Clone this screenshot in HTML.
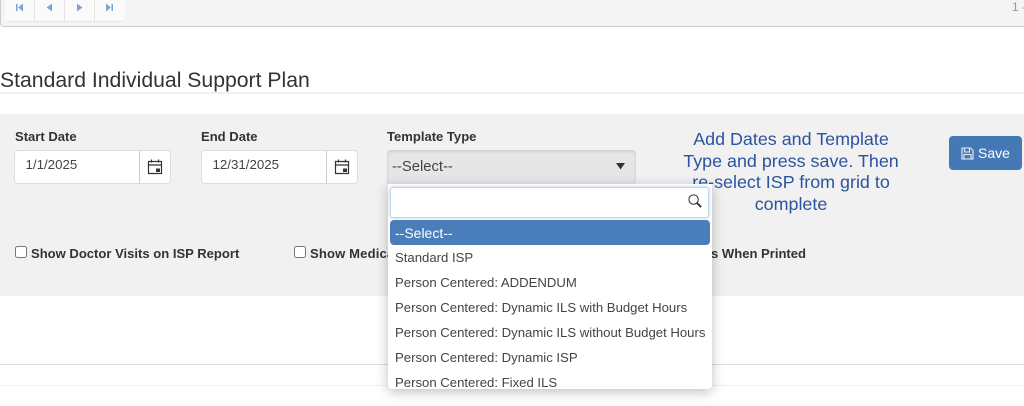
<!DOCTYPE html>
<html>
<head>
<meta charset="utf-8">
<style>
html,body{margin:0;padding:0;background:#fff}
body{width:1024px;height:406px;overflow:hidden;position:relative;font-family:"Liberation Sans",sans-serif;color:#333}
.a{position:absolute;white-space:nowrap}
.lb{font-weight:bold;font-size:13.050px;line-height:16px;color:#333}
.inp{position:absolute;top:150px;height:32px;background:#fff;border:1px solid #ddd;border-radius:4px}
.inp span{position:absolute;left:10.500px;top:6px;font-size:13.300px;line-height:16px;color:#444}
.inp i{position:absolute;top:0;bottom:0;width:0;border-left:1px solid #ccc}
.inp svg{position:absolute;top:7px}
.cb{position:absolute;width:10px;height:10px;border:1px solid #777;border-radius:2.500px;background:#fff;top:246px}
.it{position:absolute;left:7px;font-size:13.150px;line-height:16px;color:#444;white-space:nowrap}
.pg{position:absolute;top:0;height:21px;width:29px;background:#fafafa;border-right:1px solid #e4e4e4}
.pg svg{position:absolute;left:10px;top:3px}
</style>
</head>
<body>
<div class="a" style="left:0;top:-4px;width:1030px;height:30px;background:#f4f4f4;border:1px solid #ccc;border-width:0 0 1px 1px;border-radius:4px"></div>
<div class="a" style="left:5px;top:0;width:119px;height:21px;background:#fafafa;border-radius:0 0 4px 4px;border-bottom:1px solid #e6e6e6;border-left:1px solid #e4e4e4"></div>
<div class="pg" style="left:5px"><svg width="10" height="9" viewBox="0 0 10 9"><path d="M1 1h1.500v7H1zM8 .5v8L3 4.500z" fill="#7fa3d3"/></svg></div>
<div class="pg" style="left:35px"><svg width="10" height="9" viewBox="0 0 10 9"><path d="M7 .5v8L1.500 4.500z" fill="#7fa3d3"/></svg></div>
<div class="pg" style="left:65px"><svg width="10" height="9" viewBox="0 0 10 9"><path d="M2 .5v8l5.500-4z" fill="#7fa3d3"/></svg></div>
<div class="pg" style="left:95px;border-right:0"><svg width="10" height="9" viewBox="0 0 10 9"><path d="M1 .5v8l5-4zM6.500 1H8v7H6.500z" fill="#7fa3d3"/></svg></div>
<div class="a" style="left:1012px;top:0;font-size:12px;line-height:14px;color:#999">1 -</div>

<div class="a" style="left:0;top:69px;font-size:21.200px;line-height:24px;color:#333">Standard Individual Support Plan</div>
<div class="a" style="left:0;top:92px;width:1024px;height:2px;background:#f0f0f0"></div>

<div class="a" style="left:0;top:114px;width:1024px;height:182px;background:#f1f1f1"></div>

<div class="a lb" style="left:15px;top:129px">Start Date</div>
<div class="inp" style="left:14px;width:155px"><span>1/1/2025</span><i style="left:124px"></i>
<svg style="left:132px" width="16" height="17" viewBox="0 0 16 17"><path d="M1.500 3.500h13v12h-13zM1.500 7h13M4.500 1.500v3M11.500 1.500v3" fill="none" stroke="#333" stroke-width="1.200"/><rect x="9" y="10.500" width="4" height="3.500" fill="#333"/></svg></div>
<div class="a lb" style="left:201px;top:129px">End Date</div>
<div class="inp" style="left:201px;width:155px"><span>12/31/2025</span><i style="left:124px"></i>
<svg style="left:132px" width="16" height="17" viewBox="0 0 16 17"><path d="M1.500 3.500h13v12h-13zM1.500 7h13M4.500 1.500v3M11.500 1.500v3" fill="none" stroke="#333" stroke-width="1.200"/><rect x="9" y="10.500" width="4" height="3.500" fill="#333"/></svg></div>

<div class="a lb" style="left:387px;top:129px">Template Type</div>
<div class="a" style="left:387px;top:150px;width:249px;height:35px;background:#e6e6e6;border-radius:4px;box-shadow:inset 0 1px 3px rgba(0,0,0,.14)"></div>
<div class="a" style="left:392px;top:159px;font-size:14.800px;line-height:16px;color:#444">--Select--</div>
<svg class="a" style="left:616px;top:163px" width="9" height="7" viewBox="0 0 9 7"><path d="M0 0h9L4.500 6.500z" fill="#333"/></svg>

<div class="a" style="left:671px;top:129px;width:240px;text-align:center;font-size:17.900px;line-height:21.700px;color:#2b539f">Add Dates and Template<br>Type and press save. Then<br>re-select ISP from grid to<br>complete</div>

<div class="a" style="left:949px;top:136px;width:73px;height:34px;background:#4579b5;border-radius:4px"></div>
<svg class="a" style="left:961px;top:147px" width="13" height="13" viewBox="0 0 13 13"><path d="M1 1h8.500L12 3.500V12H1zM3.500 1.500v3.500h5v-3.500M3 12V7.500h7V12" fill="none" stroke="#e6eef8" stroke-width="1.100"/></svg>
<div class="a" style="left:978px;top:145px;font-size:14px;line-height:16px;color:#fff">Save</div>

<div class="cb" style="left:15px"></div>
<div class="a lb" style="left:31px;top:246px">Show Doctor Visits on ISP Report</div>
<div class="cb" style="left:294px"></div>
<div class="a lb" style="left:310px;top:246px;letter-spacing:.15px">Show Medications on ISP Report</div>
<div class="a lb" style="left:600px;top:246px;width:206px;text-align:right">Show Goals When Printed</div>

<div class="a" style="left:0;top:364px;width:1024px;height:1px;background:#ddd"></div>
<div class="a" style="left:0;top:385px;width:1024px;height:1px;background:#f0f0f0"></div>

<div class="a" style="left:388px;top:184px;width:324px;height:205px;background:#fff;border-radius:0 0 4px 4px;box-shadow:0 3px 12px rgba(0,0,0,.25);overflow:hidden">
  <div class="a" style="left:2px;top:3px;width:317px;height:29px;background:#fff;border:1px solid #c5d6ea;border-radius:3px;box-shadow:0 0 3px rgba(102,150,210,.5)"></div>
  <svg class="a" style="left:299px;top:9px" width="16" height="16" viewBox="0 0 17 17"><circle cx="7" cy="7" r="5" fill="none" stroke="#333" stroke-width="1.100"/><path d="M10.700 10.700L15 15" stroke="#333" stroke-width="2"/></svg>
  <div class="a" style="left:2px;top:36px;width:320px;height:25px;background:#4a7ebb;border-radius:4px"></div>
  <div class="it" style="top:41px;color:#fff;font-size:14px">--Select--</div>
  <div class="it" style="top:66px">Standard ISP</div>
  <div class="it" style="top:91px">Person Centered: ADDENDUM</div>
  <div class="it" style="top:116px">Person Centered: Dynamic ILS with Budget Hours</div>
  <div class="it" style="top:141px">Person Centered: Dynamic ILS without Budget Hours</div>
  <div class="it" style="top:166px">Person Centered: Dynamic ISP</div>
  <div class="it" style="top:191px">Person Centered: Fixed ILS</div>
</div>
</body>
</html>
